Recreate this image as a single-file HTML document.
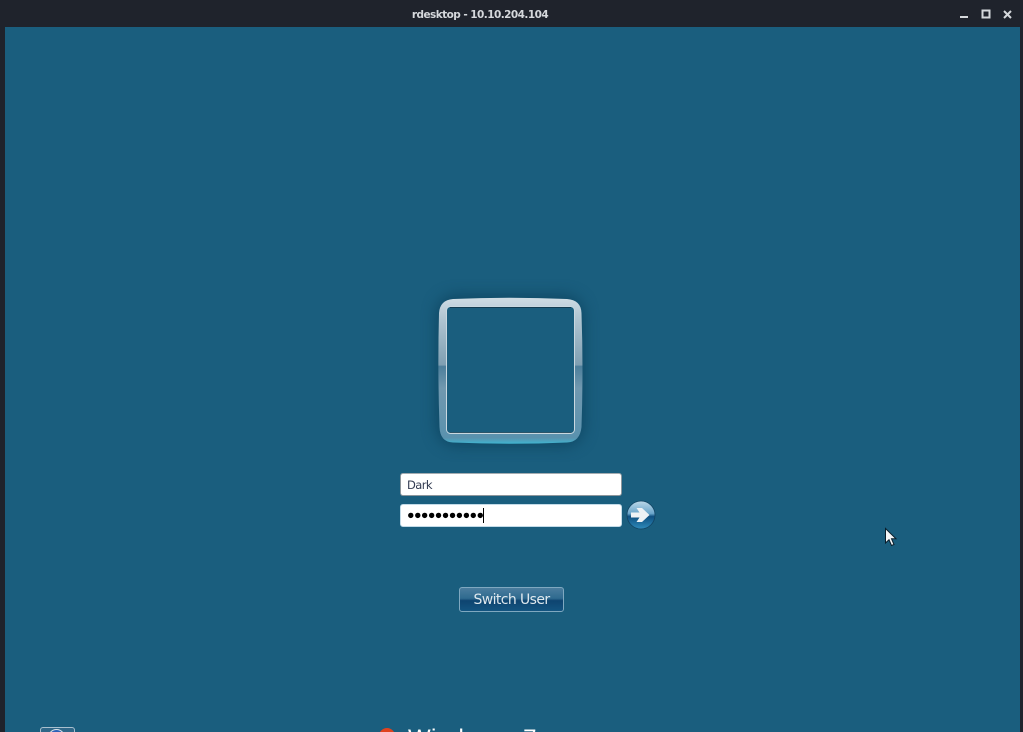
<!DOCTYPE html>
<html lang="en">
<head>
<meta charset="utf-8">
<title>rdesktop - 10.10.204.104</title>
<style>
html,body{margin:0;padding:0;width:1023px;height:732px;overflow:hidden;background:#1f232c}
#root{position:relative;width:1023px;height:732px;overflow:hidden;font-family:"Liberation Sans",sans-serif;contain:strict}
#titlebar{position:absolute;left:0;top:0;width:1023px;height:27px;background:#1f232c}
#title{position:absolute;left:380px;width:200px;top:7.500px;text-align:center;font:bold 10.500px/14px "DejaVu Sans",sans-serif;color:#d5d8dc;letter-spacing:-.55px}
#desk{position:absolute;left:5px;top:27px;width:1015px;height:705px;background:#1a5e7e;overflow:hidden}
.abs{position:absolute}
.input{position:absolute;left:400px;width:219px;background:#fff;border-radius:3px}
</style>
</head>
<body>
<div id="root">
<div id="titlebar">
  <div id="title">rdesktop - 10.10.204.104</div>
  <svg class="abs" style="left:943px;top:0" width="80" height="27">
    <rect x="17" y="16" width="8" height="2" fill="#d5d8dc"/>
    <rect x="39.500" y="10.500" width="7" height="7" fill="none" stroke="#d5d8dc" stroke-width="2"/>
    <path d="M61 11L68 18M68 11L61 18" stroke="#d5d8dc" stroke-width="2" fill="none"/>
  </svg>
</div>
<div id="desk"></div>

<!-- user tile frame -->
<div class="abs" style="left:441px;top:300px;width:138px;height:141px;border-radius:16px;box-shadow:0 0 14px 5px rgba(12,66,92,.75)"></div>
<svg class="abs" style="left:425px;top:285px" width="170" height="170">
  <defs>
    <linearGradient id="fr" x1="0" y1="0" x2="0" y2="1">
      <stop offset="0" stop-color="#cfdce4"/>
      <stop offset=".12" stop-color="#b4c8d4"/>
      <stop offset=".46" stop-color="#7f9fb2"/>
      <stop offset=".47" stop-color="#4d7f9b"/>
      <stop offset=".62" stop-color="#7198af"/>
      <stop offset=".96" stop-color="#5a92ae"/>
      <stop offset="1" stop-color="#3fb4d0"/>
    </linearGradient>
  </defs>
  <path d="M28 14Q85 11.500 142 14Q156 15 156.500 28Q158.500 85 156.500 142Q155 157 142 157.500Q85 160 28 157.500Q15 157 14.500 142Q12.500 85 14 28Q15 15 28 14Z" fill="url(#fr)"/>
  <rect x="21.500" y="21.500" width="128" height="127" rx="4" fill="#1a5e7e" stroke="#c9d8e0" stroke-width="1"/>
  <path d="M25 22.500H146" stroke="#123c52" stroke-width="1"/>
  <path d="M25 147.500H146" stroke="#2d5468" stroke-width="1"/>
</svg>

<!-- username -->
<div class="input" style="top:473px;height:21px;width:220px;border:1.500px solid #8d969c;border-top-color:#a4acb1"></div>
<div class="abs" style="left:407px;top:478px;font:11.500px/14px 'DejaVu Sans',sans-serif;letter-spacing:-.6px;color:#333c52">Dark</div>
<!-- password -->
<div class="input" style="top:504px;height:21px;width:220px;border:1.500px solid #c3dbe8"></div>
<div class="abs" style="left:407px;top:508px;height:14px;font:12.500px/14px 'Liberation Sans',sans-serif;letter-spacing:-.6px;color:#000;white-space:nowrap">●●●●●●●●●●●</div>
<div class="abs" style="left:483px;top:508px;width:1px;height:15px;background:#000"></div>

<!-- go arrow -->
<svg class="abs" style="left:626px;top:500px" width="30" height="30">
  <defs>
    <linearGradient id="ball" x1="0" y1="0" x2="0" y2="1">
      <stop offset="0" stop-color="#bcd8e8"/>
      <stop offset=".45" stop-color="#6aa6cb"/>
      <stop offset=".55" stop-color="#0e4f80"/>
      <stop offset="1" stop-color="#2f8bbb"/>
    </linearGradient>
  </defs>
  <circle cx="15" cy="15" r="14" fill="url(#ball)" stroke="#124463" stroke-width=".8"/>
  <path d="M5 12.500H13.500L10.500 8H16L23.500 15L16 22H10.500L13.500 17.500H5Z" fill="#eef2f5"/>
</svg>

<!-- switch user button -->
<div class="abs" style="left:459px;top:587px;width:103px;height:23px;border:1px solid #7fa8c0;border-radius:3px;background:linear-gradient(#4a7d9e 0,#2f6a8f 45%,#0e4470 55%,#135480 100%);color:#dfe8ee;font:14px/24px 'DejaVu Sans',sans-serif;letter-spacing:-.6px;text-align:center">Switch User</div>

<!-- mouse cursor -->
<svg class="abs" style="left:880px;top:524px" width="22" height="26">
  <path d="M5.500 4.500V19L9 15.700L11.500 21.500L14 20.500L11.500 14.800H16Z" fill="#f4f6f7" stroke="#0a1e2b" stroke-width="1"/>
</svg>

<!-- bottom ease-of-access button, clipped by page edge -->
<div class="abs" style="left:40px;top:727px;width:33px;height:12px;border:1px solid #a9c0ce;border-radius:3px;background:#2f6788"></div>
<div class="abs" style="left:48px;top:729px;width:17px;height:17px;border-radius:50%;border:1px solid #d8e4ea;background:#2d62b8;box-sizing:border-box"></div>

<!-- Windows branding, clipped by page edge -->
<div class="abs" style="left:379px;top:728px;width:16px;height:16px;border-radius:50%;background:#e0431f"></div>
<div class="abs" style="left:408px;top:724px;font:24px/30px 'Liberation Sans',sans-serif;letter-spacing:.4px;color:#fff;white-space:nowrap">Windows<span style="margin-left:15px">7</span></div>
</div>
</body>
</html>
